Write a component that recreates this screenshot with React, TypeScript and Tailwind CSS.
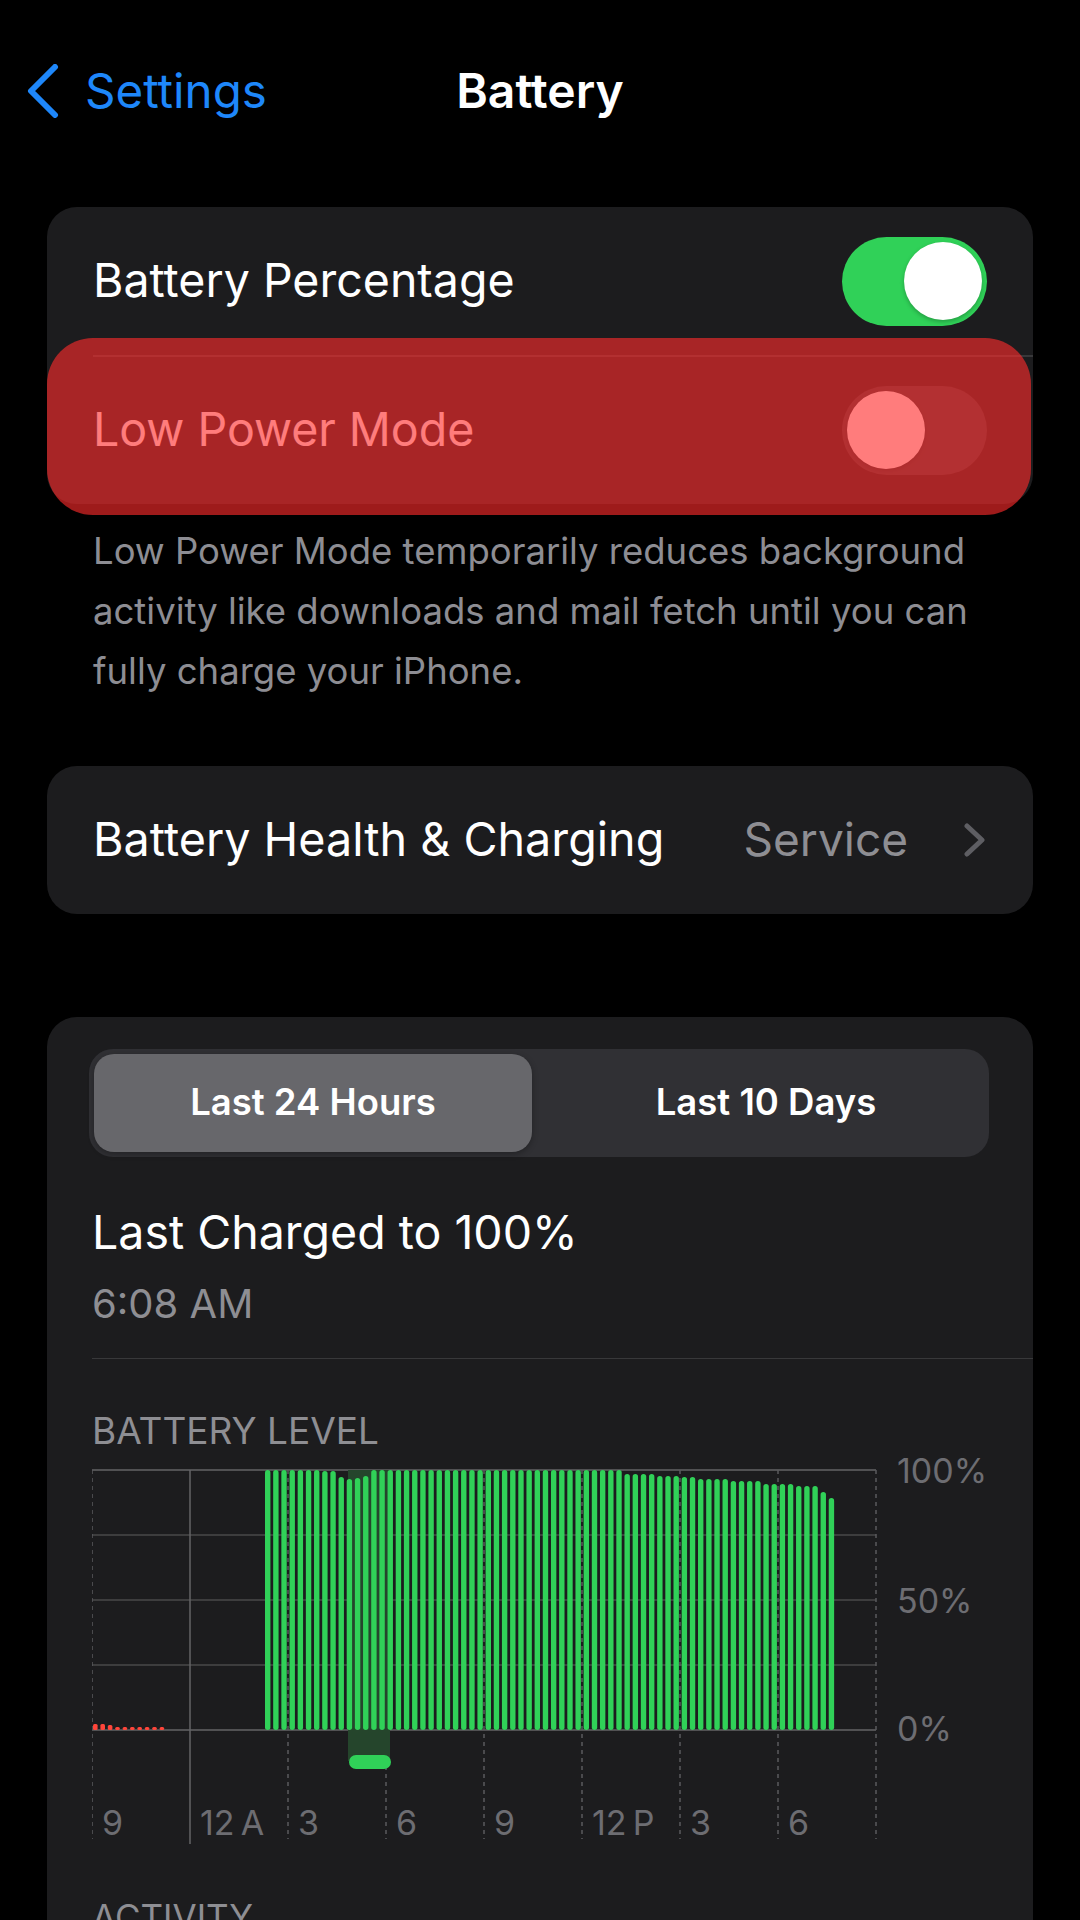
import React from 'react';

const FONT = {fontFamily: 'Inter, "Noto Sans", sans-serif'};

const Toggle = ({on}: {on: boolean}): React.JSX.Element => (
  <div
    className={
      on
        ? 'flex h-[89px] w-[145px] items-center justify-end rounded-full bg-[#30d158] px-[5px]'
        : 'flex h-[89px] w-[145px] items-center justify-start rounded-full bg-[#39393d] px-[5px]'
    }
  >
    <div className="h-[78px] w-[78px] rounded-full bg-white shadow-[0_2px_4px_rgba(0,0,0,0.25)]" />
  </div>
);

// page x of bar i -> page y of its top
const barTop = (i: number): number => {
  const x = 265 + i * 8.17;
  if (x < 322) return 1469;
  if (x < 331) return 1470;
  if (x < 337) return 1473;
  if (x < 345) return 1476;
  if (x < 353) return 1478;
  if (x < 361) return 1477;
  if (x < 369) return 1475;
  if (x < 619) return 1469;
  if (x < 656) return 1473;
  if (x < 681) return 1475;
  if (x < 698) return 1476;
  if (x < 729) return 1478;
  if (x < 761) return 1480;
  if (x < 796) return 1483;
  if (x < 819) return 1485;
  if (x < 828) return 1491;
  return 1497;
};

const BASE_Y = 1445;
const ZERO_Y = 1729 - BASE_Y;
const GRID_TOP = 1469 - BASE_Y;

const hours = [
  {x: 10, t: '9'},
  {x: 108, t: '12\u2009A'},
  {x: 206, t: '3'},
  {x: 304, t: '6'},
  {x: 402, t: '9'},
  {x: 500, t: '12\u2009P'},
  {x: 598, t: '3'},
  {x: 696, t: '6'},
];

const redBars = [6, 6, 5, 3, 3, 3, 3, 3, 3, 3];

const BatteryChart = (): React.JSX.Element => (
  <svg width="941" height="407" viewBox="0 0 941 407" className="block">
    {/* horizontal grid */}
    {[0, 1, 2, 3, 4].map((k) => (
      <line
        key={k}
        x1="0"
        x2="784"
        y1={GRID_TOP + k * 65}
        y2={GRID_TOP + k * 65}
        stroke={k === 0 || k === 4 ? '#636366' : '#48484a'}
        strokeWidth="1.5"
      />
    ))}
    {/* vertical grid */}
    {[0, 2, 3, 4, 5, 6, 7, 8].map((k) => (
      <line
        key={k}
        x1={k * 98}
        x2={k * 98}
        y1={GRID_TOP}
        y2={1838 - BASE_Y}
        stroke="#5a5a5e"
        strokeWidth="1.5"
        strokeDasharray="4 4"
      />
    ))}
    <line x1="98" x2="98" y1={GRID_TOP} y2={1843 - BASE_Y} stroke="#636366" strokeWidth="1.5" />

    {/* charging band */}
    <rect x="256" y={GRID_TOP} width="42" height={1760 - 1469} fill="#25452c" />

    {/* battery level bars */}
    {Array.from({length: 70}).map((_, i) => {
      const top = barTop(i) - BASE_Y;
      return (
        <rect
          key={i}
          x={173 + i * 8.17}
          y={top}
          width="5.4"
          height={ZERO_Y - top}
          rx="2.7"
          fill="#30d158"
        />
      );
    })}

    {redBars.map((h, i) => (
      <rect key={i} x={1 + i * 7.4} y={ZERO_Y - h} width="4.6" height={h} rx="1.5" fill="#ff453a" />
    ))}

    <rect x="257" y={1754 - BASE_Y} width="42" height="14" rx="7" fill="#30d158" />

    {/* labels */}
    <g fill="#6d6d72" style={FONT} fontSize="34">
      <text x="805" y={1482 - BASE_Y}>
        100%
      </text>
      <text x="805" y={1612 - BASE_Y}>
        50%
      </text>
      <text x="805" y={1740 - BASE_Y}>
        0%
      </text>
      {hours.map((h) => (
        <text key={h.x} x={h.x} y={1834 - BASE_Y}>
          {h.t}
        </text>
      ))}
    </g>
  </svg>
);

const App = (): React.JSX.Element => {
  return (
    <div className="h-[1920px] w-[1080px] overflow-hidden bg-black text-white" style={FONT}>
      {/* navigation bar */}
      <div className="mt-[59px] grid h-[64px] grid-cols-[1fr_auto_1fr] items-center">
        <div className="flex items-center pl-[27px]">
          <svg width="32" height="54" viewBox="0 0 32 54">
            <path
              d="M28 3 L4 27 L28 51"
              fill="none"
              stroke="#1e87fa"
              strokeWidth="6"
              strokeLinecap="round"
              strokeLinejoin="round"
            />
          </svg>
          <span className="ml-[26px] text-[47.5px] leading-[64px] text-[#1e87fa]">Settings</span>
        </div>
        <div className="text-[48px] font-semibold leading-[64px]">Battery</div>
        <div />
      </div>

      {/* toggles */}
      <div className="relative mx-[47px] mt-[84px] rounded-[30px] bg-[#1c1c1e]">
        <div className="flex h-[148px] items-center justify-between pl-[46px] pr-[46px]">
          <span className="text-[46.5px]">Battery Percentage</span>
          <Toggle on />
        </div>
        <div className="ml-[46px] h-[1.5px] bg-[#38383a]" />
        <div className="flex h-[147px] items-center justify-between pl-[46px] pr-[46px]">
          <span className="text-[46.5px]">Low Power Mode</span>
          <Toggle on={false} />
        </div>
        <div className="absolute left-0 right-[2px] top-[131px] h-[177px] rounded-[46px] bg-[rgba(255,44,44,0.62)]" />
      </div>

      <p className="mx-[93px] mt-[17px] text-[36.5px] leading-[60px] text-[#8d8d93]">
        Low Power Mode temporarily reduces background activity like downloads and mail fetch until you can
        fully charge your iPhone.
      </p>

      {/* health */}
      <div className="mx-[47px] mt-[65px] flex h-[148px] items-center rounded-[30px] bg-[#1c1c1e] pl-[46px] pr-[47px]">
        <span className="flex-1 text-[46.7px]">Battery Health &amp; Charging</span>
        <span className="text-[46px] text-[#8e8e93]">Service</span>
        <svg width="22" height="34" viewBox="0 0 22 34" className="ml-[56px]">
          <path
            d="M3 3 L18 17 L3 31"
            fill="none"
            stroke="#5e5e63"
            strokeWidth="5"
            strokeLinecap="round"
            strokeLinejoin="round"
          />
        </svg>
      </div>

      {/* usage */}
      <div className="mx-[47px] mt-[103px] h-[1000px] rounded-[30px] bg-[#1c1c1e] pt-[32px]">
        <div className="ml-[42px] mr-[44px] flex h-[108px] rounded-[24px] bg-[#303034] p-[5px]">
          <div className="flex w-[438px] items-center justify-center rounded-[20px] bg-[#67676b] text-[36.5px] font-semibold shadow-[0_2px_6px_rgba(0,0,0,0.3)]">
            Last 24 Hours
          </div>
          <div className="flex flex-1 items-center justify-center pl-[16px] text-[36.5px] font-semibold">
            Last 10 Days
          </div>
        </div>

        <div className="ml-[45px] mt-[47px] text-[46.5px] leading-[57px]">Last Charged to 100%</div>
        <div className="ml-[45px] mt-[18px] text-[40px] leading-[50px] text-[#8e8e93]">6:08 AM</div>

        <div className="ml-[45px] mt-[29px] h-[1.5px] bg-[#38383a]" />

        <div className="ml-[45px] mt-[57px] text-[37px] leading-[30px] text-[#8e8e93]">BATTERY LEVEL</div>

        <div className="ml-[45px]">
          <BatteryChart />
        </div>

        <div className="ml-[45px] mt-[43px] text-[35px] leading-[42px] text-[#8e8e93]">ACTIVITY</div>
      </div>
    </div>
  );
};

export default App;
